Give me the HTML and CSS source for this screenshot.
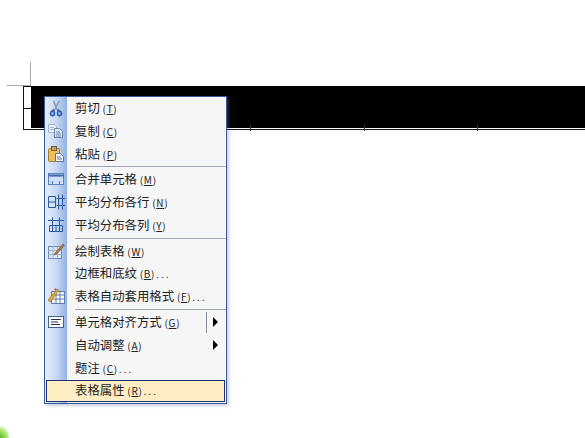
FILE: index.html
```html
<!DOCTYPE html>
<html lang="zh-CN">
<head>
<meta charset="utf-8">
<title>表格右键菜单</title>
<link rel="stylesheet" href="styles.css">
</head>
<body>
<main class="page">
  <div class="crop crop-v"></div>
  <div class="crop crop-h"></div>
  <div class="doc-table">
    <div class="row-head"><div class="head-cell"></div><div class="head-cell"></div></div>
    <div class="selected"></div>
    <i class="tick tick-1"></i><i class="tick tick-2"></i><i class="tick tick-3"></i>
  </div>

  <nav class="menu">
    <div class="item">
      <span class="ico"><svg viewBox="0 0 18 18" width="18" height="18"><path d="M6.500 2l3.500 8.500M12 2L8 10.500" stroke="#8c96a8" stroke-width="1.500" fill="none"/><path d="M7.500 10.500L5 12.500M10.500 10.500L12.500 12.500" stroke="#2f5fb5" stroke-width="2" fill="none"/><ellipse cx="5.500" cy="14.500" rx="2" ry="2.200" fill="#9db8e8" stroke="#2f5fb5" stroke-width="1.500"/><ellipse cx="12.500" cy="14.500" rx="2" ry="2.200" fill="#9db8e8" stroke="#2f5fb5" stroke-width="1.500"/></svg></span>
      <span class="label">剪切 <small>(<u>T</u>)</small></span>
    </div>
    <div class="item">
      <span class="ico"><svg viewBox="0 0 18 18" width="18" height="18"><path d="M1.500 2.500h6l2 2v6h-8z" fill="#eef3fb" stroke="#9fb2d0"/><path d="M3 5.500h4M3 7.500h4" stroke="#9fb2d0"/><path d="M7.500 6.500h5l3 3v6h-8z" fill="#dfe8f6" stroke="#6b84ad"/><path d="M9 10h4M9 12h5M9 14h5" stroke="#6b84ad"/></svg></span>
      <span class="label">复制 <small>(<u>C</u>)</small></span>
    </div>
    <div class="item">
      <span class="ico"><svg viewBox="0 0 18 18" width="18" height="18"><rect x="1.500" y="3.500" width="11" height="13" rx="1" fill="#eebf5c" stroke="#a67d30"/><rect x="4.500" y="1.500" width="5" height="4" fill="#b9a27a" stroke="#6b5b3b"/><path d="M8.500 8.500h5l3 3v5h-8z" fill="#f4f6fb" stroke="#5c76a3"/><path d="M10 12h4M10 14h5" stroke="#5c76a3"/></svg></span>
      <span class="label">粘贴 <small>(<u>P</u>)</small></span>
    </div>
    <div class="sep"></div>
    <div class="item">
      <span class="ico"><svg viewBox="0 0 18 18" width="18" height="18"><rect x="1.500" y="3.500" width="15" height="11" fill="#cfe0f6" stroke="#5b82bb"/><path d="M1.500 5.500h15" stroke="#3f6aa8" stroke-width="2"/><path d="M5.500 4v3M12.500 4v3M5.500 11v3M12.500 11v3" stroke="#5b82bb"/></svg></span>
      <span class="label">合并单元格 <small>(<u>M</u>)</small></span>
    </div>
    <div class="item">
      <span class="ico"><svg viewBox="0 0 18 18" width="18" height="18"><path d="M1.500 3.500h7v11h-7zM1.500 9h7M11.500 1.500v15M15.500 1.500v15M9.500 5.500h8.500M9.500 12.500h8.500" fill="none" stroke="#2d5a9c"/></svg></span>
      <span class="label">平均分布各行 <small>(<u>N</u>)</small></span>
    </div>
    <div class="item">
      <span class="ico"><svg viewBox="0 0 18 18" width="18" height="18"><path d="M2.500 9.500h13v6h-13zM9 9.500v6M5.500 9.500v6M12.500 9.500v6M1 4.500h16M5.500 1.500v8M12.500 1.500v8" fill="none" stroke="#2d5a9c"/></svg></span>
      <span class="label">平均分布各列 <small>(<u>Y</u>)</small></span>
    </div>
    <div class="sep"></div>
    <div class="item">
      <span class="ico"><svg viewBox="0 0 18 18" width="18" height="18"><rect x="1.500" y="4.500" width="13" height="12" fill="#dde8f7" stroke="#6f8cb8"/><path d="M1.500 8.500h13M1.500 12.500h13M6 4.500v12M10.500 4.500v12" stroke="#9db3d3"/><path d="M8 11l8-9 1.500 1.500-8 8.500-2.500 1z" fill="#a8803c" stroke="#6a5020" stroke-width=".6"/></svg></span>
      <span class="label">绘制表格 <small>(<u>W</u>)</small></span>
    </div>
    <div class="item">
      <span class="label">边框和底纹 <small>(<u>B</u>)<b>...</b></small></span>
    </div>
    <div class="item">
      <span class="ico"><svg viewBox="0 0 18 18" width="18" height="18"><rect x="4.500" y="4.500" width="13" height="12" fill="#fdfbf0" stroke="#5d7fb0"/><path d="M4.500 8h13M4.500 12h13M9 4.500v12M13 4.500v12" stroke="#5d7fb0"/><path d="M1 13L10 2l2 1.500L3 15z" fill="#e2a93a" stroke="#8a6420" stroke-width=".6"/><path d="M8 2l1 1" stroke="#c43" stroke-width="2"/></svg></span>
      <span class="label">表格自动套用格式 <small>(<u>F</u>)<b>...</b></small></span>
    </div>
    <div class="sep"></div>
    <div class="item">
      <span class="ico"><svg viewBox="0 0 18 18" width="18" height="18"><rect x="1.500" y="3.500" width="15" height="11" fill="#fff" stroke="#4a5f86"/><path d="M4 6.500h10M4 9h7M4 11.500h9" stroke="#24344f"/></svg></span>
      <span class="label">单元格对齐方式 <small>(<u>G</u>)</small></span>
      <span class="split"></span>
      <span class="arrow"></span>
    </div>
    <div class="item">
      <span class="label">自动调整 <small>(<u>A</u>)</small></span>
      <span class="arrow"></span>
    </div>
    <div class="item">
      <span class="label">题注 <small>(<u>C</u>)<b>...</b></small></span>
    </div>
    <div class="item item-active">
      <span class="label">表格属性 <small>(<u>R</u>)<b>...</b></small></span>
    </div>
  </nav>

  <div class="blob"></div>
</main>
</body>
</html>
```
FILE: styles.css
```css
html, body {
  margin: 0;
  padding: 0;
  background: #fff;
}
.page {
  position: relative;
  width: 585px;
  height: 438px;
  overflow: hidden;
  padding-top: 86px;
  box-sizing: border-box;
  font-family: "Noto Sans CJK SC", "Liberation Sans", sans-serif;
  color: #222;
}
.crop { position: absolute; background: #a9a9a9; }
.crop-v { left: 30px; top: 62px; width: 1px; height: 24px; }
.crop-h { left: 7px; top: 85px; width: 24px; height: 1px; }

.doc-table {
  position: relative;
  display: flex;
  margin-left: 23px;
  height: 44px;
  border-bottom: 1px solid #111;
  box-sizing: border-box;
}
.row-head {
  width: 8px;
  display: flex;
  flex-direction: column;
  border-left: 1px solid #111;
  box-sizing: border-box;
}
.head-cell { flex: 1; border-top: 1px solid #111; }
.selected { flex: 1; height: 42px; background: #000; }
.tick { position: absolute; bottom: -2px; width: 1px; height: 6px; background: #333; }
.tick-1 { left: 227px; }
.tick-2 { left: 341px; }
.tick-3 { left: 454px; }

.menu {
  position: absolute;
  left: 44px;
  top: 96px;
  width: 183px;
  height: 308px;
  box-sizing: border-box;
  border: 1px solid #3a5a9e;
  background: linear-gradient(90deg, #e6eefb 0, #c5d7f3 12px, #8fb0e6 22px, #f6f6f6 22px);
  box-shadow: 2px 2px 3px rgba(110, 120, 150, .35);
}
.item {
  position: relative;
  display: flex;
  align-items: center;
  height: 22.8px;
  font-size: 12.4px;
  line-height: 22px;
  white-space: nowrap;
  padding-left: 30px;
}
.item small { font-size: 10px; letter-spacing: .7px; }
.item b { font-weight: 400; letter-spacing: 2px; margin-left: 1px; }
.ico {
  position: absolute;
  left: 2px;
  top: 2px;
  width: 18px;
  height: 18px;
}
.ico svg { display: block; }
.sep {
  height: 1px;
  margin: 1px 0 1px 30px;
  background: #9fa8bb;
}
.split {
  position: absolute;
  left: 161px;
  top: 1px;
  width: 1px;
  height: 21px;
  background: #8a8f9c;
}
.arrow {
  position: absolute;
  left: 168px;
  top: 6px;
  width: 0;
  height: 0;
  border-left: 5px solid #000;
  border-top: 5px solid transparent;
  border-bottom: 5px solid transparent;
}
.item-active {
  margin: 0 1px;
  padding-left: 28px;
  border: 1px solid #1f2f6e;
  box-sizing: border-box;
  background: #ffeec4;
  line-height: 20px;
}
.blob {
  position: absolute;
  left: -11px;
  top: 426px;
  width: 20px;
  height: 20px;
  border-radius: 50%;
  background: radial-gradient(circle at 50% 60%, #5aa830 0, #8ad84a 35%, #d6f5b5 70%, #fff 100%);
}
```
